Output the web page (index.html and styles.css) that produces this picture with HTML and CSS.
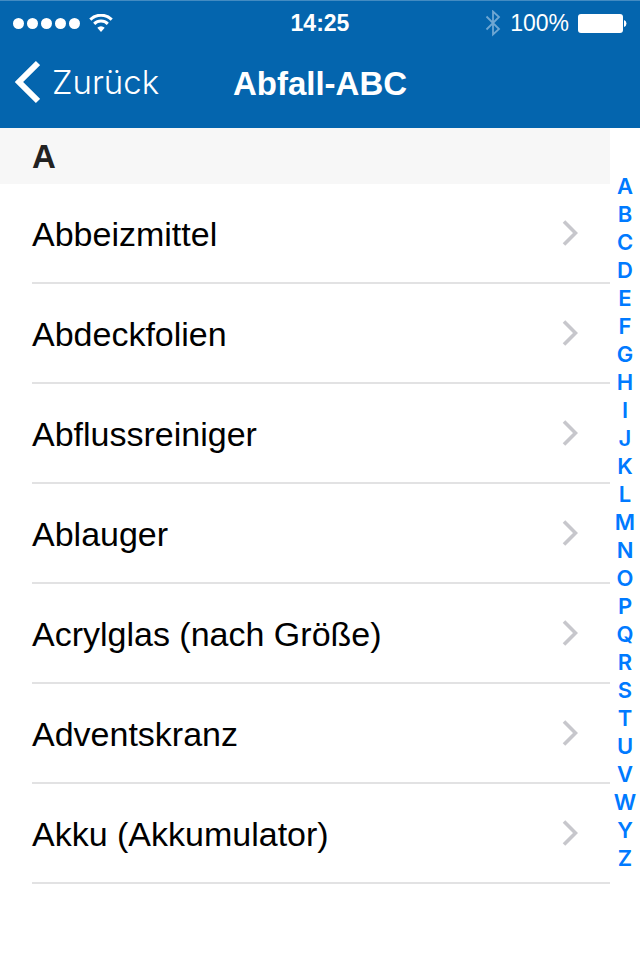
FILE: index.html
```html
<!DOCTYPE html>
<html lang="de">
  <head>
    <title>Abfall-ABC</title>
    <meta charset="UTF-8" />
    <meta name="viewport" content="width=device-width, initial-scale=1.0" />
    <link rel="stylesheet" href="styles.css">
  </head>
  <body>
    <header class="header">
      <div class="status-bar">
        <div class="status-left">
          <svg width="68" height="12" viewBox="0 0 68 12" fill="#fff">
            <circle cx="5.5" cy="5.5" r="5.5" />
            <circle cx="19.5" cy="5.5" r="5.5" />
            <circle cx="33.5" cy="5.5" r="5.5" />
            <circle cx="47.5" cy="5.5" r="5.5" />
            <circle cx="61.5" cy="5.5" r="5.5" />
          </svg>
          <svg width="24" height="20" viewBox="0 0 24 20" fill="none" stroke="#fff" stroke-width="3">
            <path d="M1.3 5.6A15.2 15.2 0 0 1 22.7 5.6" />
            <path d="M5.2 9.9A9.7 9.7 0 0 1 18.8 9.9" />
            <path d="M8.3 13.8A5.3 5.3 0 0 1 15.7 13.8L12 18Z" fill="#fff" stroke="none" />
          </svg>
        </div>
        <span class="time">14:25</span>
        <div class="status-right">
          <svg width="16" height="28" viewBox="0 0 16 28" fill="none" stroke="#6fa7d3" stroke-width="1.8">
            <path d="M1.5 6.5L14 19L8 24.5V1.5L14 7L1.5 19.5" />
          </svg>
          <span>100%</span>
          <svg width="49" height="20" viewBox="0 0 49 20" fill="#fff">
            <rect x="0" y="0" width="45" height="19" rx="3" />
            <path d="M46 6A3.2 3.6 0 0 1 46 13Z" />
          </svg>
        </div>
      </div>
      <div class="nav-bar">
        <button class="back" type="button">
          <svg width="26" height="44" viewBox="0 0 26 44" fill="none" stroke="#fff" stroke-width="6">
            <path d="M24 3L5 22L24 41" />
          </svg>
          Zurück
        </button>
        <h1>Abfall-ABC</h1>
      </div>
    </header>

    <div class="content">
      <main class="list">
        <h2>A</h2>
        <ul>
          <li><a href="#"><span>Abbeizmittel</span> <svg class="arrow" viewBox="0 0 16 26"><path d="M2 1.5L13.5 13L2 24.5" /></svg></a></li>
          <li><a href="#"><span>Abdeckfolien</span> <svg class="arrow" viewBox="0 0 16 26"><path d="M2 1.5L13.5 13L2 24.5" /></svg></a></li>
          <li><a href="#"><span>Abflussreiniger</span> <svg class="arrow" viewBox="0 0 16 26"><path d="M2 1.5L13.5 13L2 24.5" /></svg></a></li>
          <li><a href="#"><span>Ablauger</span> <svg class="arrow" viewBox="0 0 16 26"><path d="M2 1.5L13.5 13L2 24.5" /></svg></a></li>
          <li><a href="#"><span>Acrylglas (nach Größe)</span> <svg class="arrow" viewBox="0 0 16 26"><path d="M2 1.5L13.5 13L2 24.5" /></svg></a></li>
          <li><a href="#"><span>Adventskranz</span> <svg class="arrow" viewBox="0 0 16 26"><path d="M2 1.5L13.5 13L2 24.5" /></svg></a></li>
          <li><a href="#"><span>Akku (Akkumulator)</span> <svg class="arrow" viewBox="0 0 16 26"><path d="M2 1.5L13.5 13L2 24.5" /></svg></a></li>
        </ul>
      </main>

      <nav class="index">
        <a href="#">A</a>
        <a href="#">B</a>
        <a href="#">C</a>
        <a href="#">D</a>
        <a href="#">E</a>
        <a href="#">F</a>
        <a href="#">G</a>
        <a href="#">H</a>
        <a href="#">I</a>
        <a href="#">J</a>
        <a href="#">K</a>
        <a href="#">L</a>
        <a href="#">M</a>
        <a href="#">N</a>
        <a href="#">O</a>
        <a href="#">P</a>
        <a href="#">Q</a>
        <a href="#">R</a>
        <a href="#">S</a>
        <a href="#">T</a>
        <a href="#">U</a>
        <a href="#">V</a>
        <a href="#">W</a>
        <a href="#">Y</a>
        <a href="#">Z</a>
      </nav>
    </div>
  </body>
</html>
```
FILE: styles.css
```css
* {
  box-sizing: border-box;
}
body {
  margin: 0;
  background-color: #fff;
  color: #000;
  font-family: "Liberation Sans", Arial, sans-serif;
}
svg {
  display: block;
  flex-shrink: 0;
}
.header {
  background-color: #0465ae;
  border-top: 1px solid #438bc2;
  color: #fff;
}
.status-bar, .nav-bar {
  display: grid;
  grid-template-columns: 1fr auto 1fr;
  align-items: center;
}
.status-bar {
  height: 43px;
  padding: 2px 13px 0;
  font-size: 23px;
}
.status-left, .status-right {
  display: flex;
  align-items: center;
}
.status-left {
  gap: 8px;
}
.status-right {
  justify-content: flex-end;
  gap: 9px;
}
.time {
  font-weight: bold;
}
.nav-bar {
  height: 84px;
  padding: 0 14px 8px;
}
.back {
  display: flex;
  align-items: center;
  justify-self: start;
  gap: 12px;
  padding: 0;
  border: none;
  background: none;
  color: #fff;
  font-family: Inter, sans-serif;
  font-size: 33px;
  font-weight: 300;
  cursor: pointer;
}
h1 {
  margin: 0;
  padding-top: 4px;
  font-size: 33px;
  line-height: 40px;
}
.content {
  display: flex;
}
.list {
  flex: 1;
}
h2 {
  margin: 0;
  padding: 2px 32px 0;
  background-color: #f7f7f7;
  color: #222;
  font-size: 33px;
  line-height: 54px;
}
ul {
  margin: 0;
  padding: 0 0 0 32px;
  list-style: none;
}
li {
  border-bottom: 2px solid #e2e2e3;
}
li a {
  display: flex;
  align-items: center;
  justify-content: space-between;
  min-height: 98px;
  padding-right: 32px;
  color: #000;
  font-size: 34px;
  line-height: 40px;
  text-decoration: none;
}
li span {
  padding-top: 2px;
}
.arrow {
  width: 16px;
  height: 26px;
  fill: none;
  stroke: #c7c7cc;
  stroke-width: 3.6;
}
.index {
  display: flex;
  flex-direction: column;
  width: 30px;
  padding-top: 44px;
}
.index a {
  color: #007aff;
  font-family: Inter, sans-serif;
  font-size: 22px;
  font-weight: 600;
  line-height: 28px;
  text-align: center;
  text-decoration: none;
}
```
